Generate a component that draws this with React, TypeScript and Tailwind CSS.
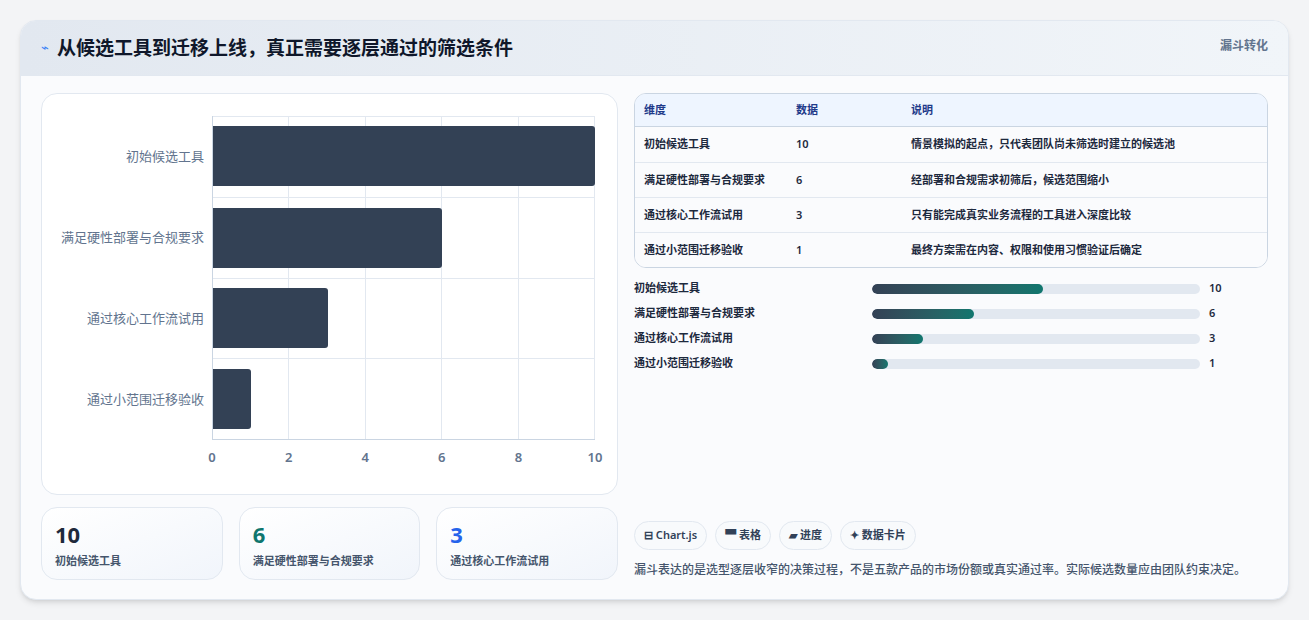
import React from 'react';

const rows = [
  { label: '初始候选工具', value: 10, note: '情景模拟的起点，只代表团队尚未筛选时建立的候选池', pct: 52 },
  { label: '满足硬性部署与合规要求', value: 6, note: '经部署和合规需求初筛后，候选范围缩小', pct: 31 },
  { label: '通过核心工作流试用', value: 3, note: '只有能完成真实业务流程的工具进入深度比较', pct: 15.5 },
  { label: '通过小范围迁移验收', value: 1, note: '最终方案需在内容、权限和使用习惯验证后确定', pct: 5 },
];

const font = { fontFamily: '"Noto Sans", "Noto Sans CJK SC", sans-serif' };

function Chart() {
  const ticks = [0, 2, 4, 6, 8, 10];
  return (
    <div className="flex-1 bg-white rounded-2xl border border-slate-200 pt-[22px] pb-[14px] pl-3 pr-[22px] flex">
      <div className="w-[158px] flex flex-col pr-2">
        {rows.map((r) => (
          <div key={r.label} className="flex-1 flex items-center justify-end text-[13px] text-slate-500 whitespace-nowrap">{r.label}</div>
        ))}
        <div className="h-[40px]" />
      </div>
      <div className="flex-1 flex flex-col">
        <div className="flex-1 relative border-l border-b border-slate-300">
          <div className="absolute inset-0 grid grid-cols-5">
            {[0, 1, 2, 3, 4].map((i) => (
              <div key={i} className="border-r border-t border-slate-200" />
            ))}
          </div>
          <div className="absolute inset-0 grid grid-rows-4">
            {rows.map((r, i) => (
              <div key={r.label} className={`flex items-center ${i > 0 ? 'border-t border-slate-200' : ''}`}>
                <div className="h-[60px] bg-[#334155] rounded-r-[3px]" style={{ width: `${r.value * 10}%` }} />
              </div>
            ))}
          </div>
        </div>
        <div className="h-[40px] relative">
          {ticks.map((t) => (
            <span key={t} className="absolute top-[8px] -translate-x-1/2 text-[13px] font-semibold text-slate-500" style={{ left: `${t * 10}%` }}>{t}</span>
          ))}
        </div>
      </div>
    </div>
  );
}

export default function App() {
  return (
    <div className="w-[1309px] h-[620px] bg-[#f3f4f6] pt-[20px] px-[20px]" style={font}>
      <div className="h-[580px] bg-[#fafbfd] rounded-2xl border border-slate-200 shadow-md overflow-hidden flex flex-col">
        <div className="h-[55px] bg-gradient-to-r from-[#e2e8f0] to-[#f1f5f9] flex items-center justify-between px-5 border-b border-slate-200">
          <div className="flex items-center gap-2">
            <span className="text-[#3b82f6] text-[13px]">⌁</span>
            <h1 className="text-[19px] font-bold text-[#0f172a]">从候选工具到迁移上线，真正需要逐层通过的筛选条件</h1>
          </div>
          <span className="text-[12px] font-semibold text-slate-500 self-start mt-[16px]">漏斗转化</span>
        </div>
        <div className="flex-1 flex gap-4 px-5 pt-[17px] pb-[19px]">
          <div className="w-[577px] flex flex-col gap-3">
            <Chart />
            <div className="grid grid-cols-3 gap-4 h-[73px]">
              {[
                { v: '10', c: 'text-[#1e293b]', l: '初始候选工具' },
                { v: '6', c: 'text-[#0f766e]', l: '满足硬性部署与合规要求' },
                { v: '3', c: 'text-[#2563eb]', l: '通过核心工作流试用' },
              ].map((s) => (
                <div key={s.l} className="rounded-2xl border border-slate-200 bg-gradient-to-br from-white to-[#f1f5fb] px-[13px] pt-[12px]">
                  <div className={`text-[22px] font-bold leading-[28px] ${s.c}`}>{s.v}</div>
                  <div className="text-[11px] font-semibold text-slate-600 mt-[5px]">{s.l}</div>
                </div>
              ))}
            </div>
          </div>
          <div className="flex-1 flex flex-col">
            <div className="rounded-xl border border-slate-300 overflow-hidden bg-white">
              <div className="grid grid-cols-[152px_115px_1fr] h-[33px] items-center bg-[#eef5ff] border-b border-slate-300 px-[9px] text-[11px] font-semibold text-[#1e3a8a]">
                <span>维度</span><span>数据</span><span>说明</span>
              </div>
              {rows.map((r, i) => (
                <div key={r.label} className={`grid grid-cols-[152px_115px_1fr] h-[35px] items-center px-[9px] text-[11px] font-semibold text-slate-800 bg-[#fafbfd] ${i > 0 ? 'border-t border-slate-200' : ''}`}>
                  <span>{r.label}</span><span>{r.value}</span><span>{r.note}</span>
                </div>
              ))}
            </div>
            <div className="flex flex-col gap-[10px] mt-[13px]">
              {rows.map((r) => (
                <div key={r.label} className="flex items-center h-[15px] text-[11px] font-semibold text-slate-800">
                  <span className="w-[238px]">{r.label}</span>
                  <div className="w-[328px] h-[10px] rounded-full bg-[#e2e8f0] overflow-hidden">
                    <div className="h-full rounded-full bg-gradient-to-r from-[#334155] to-[#0f766e]" style={{ width: `${r.pct}%` }} />
                  </div>
                  <span className="ml-[9px]">{r.value}</span>
                </div>
              ))}
            </div>
            <div className="mt-auto flex gap-2">
              {['⊟ Chart.js', '▀ 表格', '▰ 进度', '✦ 数据卡片'].map((t) => (
                <span key={t} className="h-[29px] px-[9px] flex items-center rounded-full border border-slate-200 bg-[#f8fafc] text-[11px] font-semibold text-slate-700">{t}</span>
              ))}
            </div>
            <p className="mt-[10px] text-[12px] leading-[20px] text-slate-600 font-medium">漏斗表达的是选型逐层收窄的决策过程，不是五款产品的市场份额或真实通过率。实际候选数量应由团队约束决定。</p>
          </div>
        </div>
      </div>
    </div>
  );
}
